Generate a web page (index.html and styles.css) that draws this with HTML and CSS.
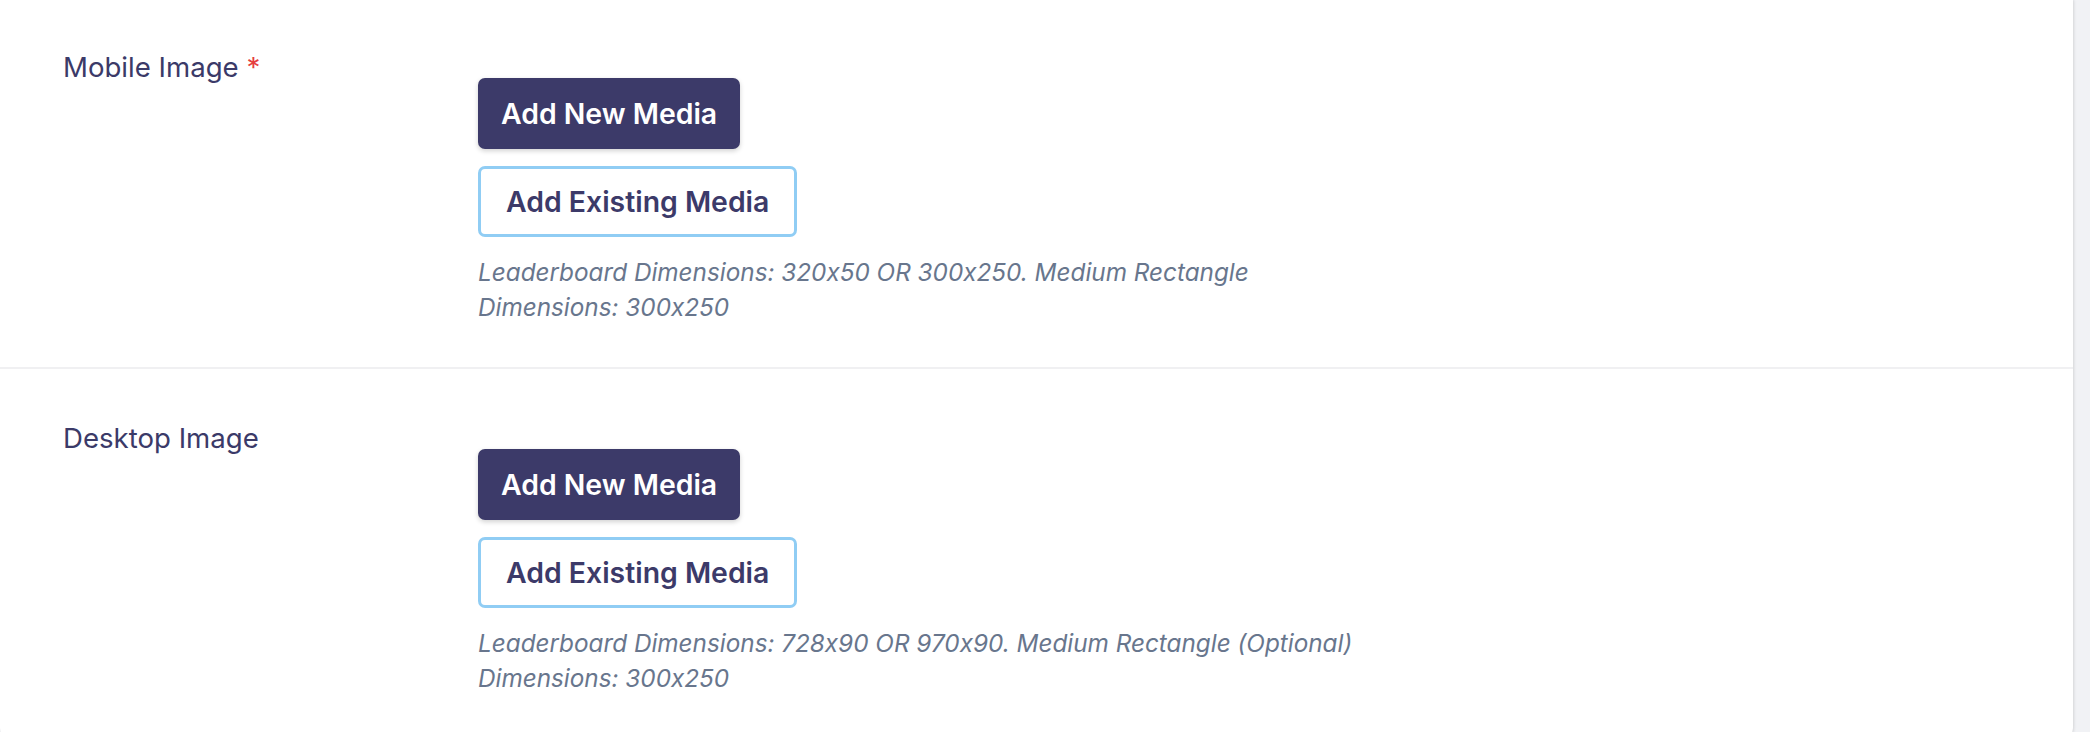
FILE: index.html
```html
<!DOCTYPE html>
<html lang="en">
<head>
    <meta charset="UTF-8">
    <meta name="viewport" content="width=device-width, initial-scale=1.0">
    <title>Banner Images</title>
    <link rel="stylesheet" href="styles.css">
</head>
<body>
    <div class="card">
        <div class="field">
            <label class="field-label">Mobile Image <span class="required">*</span></label>
            <div class="field-body">
                <button type="button" class="btn btn-primary">Add New Media</button>
                <button type="button" class="btn btn-outline">Add Existing Media</button>
                <p class="help">Leaderboard Dimensions: 320x50 OR 300x250. Medium Rectangle Dimensions: 300x250</p>
            </div>
        </div>
        <div class="field">
            <label class="field-label">Desktop Image</label>
            <div class="field-body">
                <button type="button" class="btn btn-primary">Add New Media</button>
                <button type="button" class="btn btn-outline">Add Existing Media</button>
                <p class="help">Leaderboard Dimensions: 728x90 OR 970x90. Medium Rectangle (Optional) Dimensions: 300x250</p>
            </div>
        </div>
    </div>
</body>
</html>
```

FILE: styles.css
```css
body {
    font-family: Inter, "Noto Sans", sans-serif;
    font-feature-settings: "calt" 0;
    margin: 0;
    padding: 0;
    background-color: #f1f2f5;
    color: #3b3a68;
    overflow: hidden;
}
.card {
    width: 2073px;
    background-color: white;
    border-radius: 0 0 10px 10px;
    box-shadow: 1px 0 3px rgba(0, 0, 0, 0.12);
}
.field {
    display: flex;
    padding: 47px 0 42px 63px;
}
.field + .field {
    border-top: 2px solid #f0f0f2;
    padding-top: 49px;
}
.field-label {
    width: 415px;
    font-size: 27.6px;
    line-height: 40px;
    color: #3b3a68;
}
.required {
    color: #e53e3e;
}
.field-body {
    display: flex;
    flex-direction: column;
    align-items: flex-start;
    gap: 17px;
    margin-top: 31px;
}
.btn {
    font-family: Inter, "Noto Sans", sans-serif;
    font-feature-settings: "calt" 0;
    font-size: 28.4px;
    font-weight: 600;
    line-height: 41px;
    border-radius: 7px;
    cursor: pointer;
}
.btn-primary {
    padding: 15px 23px;
    background-color: #3c3a69;
    color: white;
    border: none;
    box-shadow: 0 2px 5px rgba(0, 0, 0, 0.18);
}
.btn-outline {
    padding: 12px 25px;
    background-color: white;
    color: #3c3a69;
    border: 3px solid #90cdf4;
}
.help {
    max-width: 890px;
    margin: 1px 0 0;
    font-size: 24.3px;
    font-style: italic;
    line-height: 35px;
    color: #68768d;
}
```
